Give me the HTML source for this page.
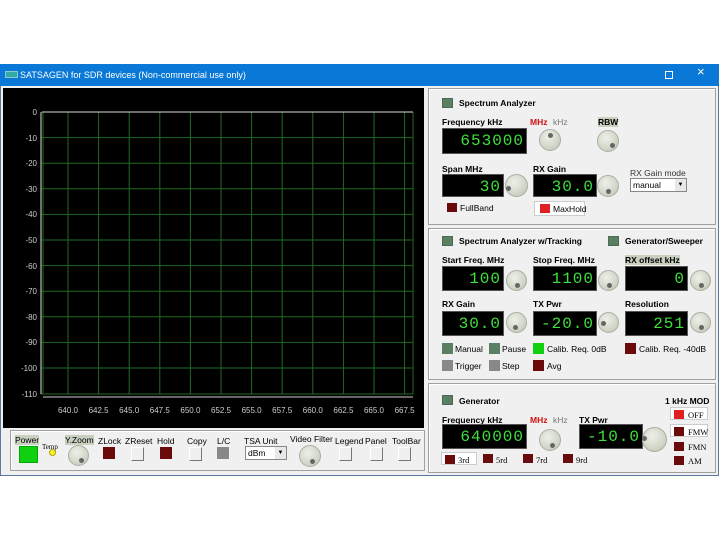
<!DOCTYPE html>
<html><head><meta charset="utf-8"><style>
*{margin:0;padding:0;box-sizing:border-box}
body{width:720px;height:540px;background:#fff;position:relative;overflow:hidden;font-family:"Liberation Sans",sans-serif;font-size:8px;color:#000}
.a{position:absolute}
.t{position:absolute;white-space:nowrap;font-size:8.5px;line-height:10px}
.b{font-weight:bold}
.sq{position:absolute;width:11px;height:10px;background:#5a7f62;border:1px solid #4a6a52}
.disp{position:absolute;background:#000;border:1px solid #555;color:#3de03d;font-family:"Liberation Mono",monospace;font-size:16px;letter-spacing:1px;text-align:right;padding-right:2px;line-height:24px}
.knob{position:absolute;border-radius:50%;background:radial-gradient(circle at 40% 35%,#eef0e8,#d0d6c8 60%,#b8bfb0);border:1px solid #a9b0a2}
.knob i{position:absolute;width:5px;height:5px;border-radius:50%;background:#666}
.panel{position:absolute;background:#f0f0f0;border:1px solid #a0a0a0;box-shadow:inset 1px 1px 0 #fff}
.btn{position:absolute;background:#f0f0f0;border:1px solid;border-color:#fff #777 #777 #fff}
.cb{position:absolute;width:10px;height:9px}
</style></head><body>
<div class="a" style="left:0;top:64px;width:719px;height:22px;background:#0a78d7"></div>
<div class="a" style="left:5px;top:71px;width:13px;height:7px;background:#3aa;border:1px solid #8cc"></div>
<div class="t" style="left:20px;top:70px;color:#fff;font-size:9px">SATSAGEN for SDR devices (Non-commercial use only)</div>
<div class="a" style="left:665px;top:71px;width:8px;height:8px;border:1px solid #fff"></div>
<div class="t" style="left:697px;top:67px;color:#fff;font-size:13px">×</div>
<div class="a" style="left:0;top:86px;width:719px;height:390px;background:#f0f0f0;border:1px solid #5a7aa0;border-top:none"></div>
<div class="a" style="left:3px;top:88px;width:421px;height:340px;background:#000"></div>
<svg class="a" style="left:0;top:0" width="430" height="430">
<g stroke="#1f6a1f" stroke-width="1">
<line x1="43" y1="112" x2="43" y2="394"/>
<line x1="68" y1="112" x2="68" y2="394"/><line x1="98.6" y1="112" x2="98.6" y2="394"/><line x1="129.2" y1="112" x2="129.2" y2="394"/><line x1="159.8" y1="112" x2="159.8" y2="394"/><line x1="190.4" y1="112" x2="190.4" y2="394"/><line x1="221" y1="112" x2="221" y2="394"/><line x1="251.6" y1="112" x2="251.6" y2="394"/><line x1="282.2" y1="112" x2="282.2" y2="394"/><line x1="312.8" y1="112" x2="312.8" y2="394"/><line x1="343.4" y1="112" x2="343.4" y2="394"/><line x1="374" y1="112" x2="374" y2="394"/><line x1="404.6" y1="112" x2="404.6" y2="394"/><line x1="413" y1="112" x2="413" y2="394"/>
<line x1="41" y1="137.6" x2="413" y2="137.6"/><line x1="41" y1="163.2" x2="413" y2="163.2"/><line x1="41" y1="188.8" x2="413" y2="188.8"/><line x1="41" y1="214.4" x2="413" y2="214.4"/><line x1="41" y1="240" x2="413" y2="240"/><line x1="41" y1="265.6" x2="413" y2="265.6"/><line x1="41" y1="291.2" x2="413" y2="291.2"/><line x1="41" y1="316.8" x2="413" y2="316.8"/><line x1="41" y1="342.4" x2="413" y2="342.4"/><line x1="41" y1="368" x2="413" y2="368"/><line x1="41" y1="394" x2="413" y2="394"/>
</g>
<line x1="42" y1="112" x2="413" y2="112" stroke="#ddd"/>
<line x1="41" y1="112" x2="41" y2="394" stroke="#ddd"/>
<line x1="43" y1="397" x2="413" y2="397" stroke="#ccc"/>
<g fill="#ccc" font-family="Liberation Sans" font-size="8" text-anchor="end">
<text x="37" y="115">0</text><text x="37" y="141">-10</text><text x="37" y="166">-20</text><text x="37" y="192">-30</text><text x="37" y="217">-40</text><text x="37" y="243">-50</text><text x="37" y="269">-60</text><text x="37" y="294">-70</text><text x="37" y="320">-80</text><text x="37" y="345">-90</text><text x="37" y="371">-100</text><text x="37" y="397">-110</text>
</g>
<g fill="#ccc" font-family="Liberation Sans" font-size="8" text-anchor="middle">
<text x="68" y="413">640.0</text><text x="98.6" y="413">642.5</text><text x="129.2" y="413">645.0</text><text x="159.8" y="413">647.5</text><text x="190.4" y="413">650.0</text><text x="221" y="413">652.5</text><text x="251.6" y="413">655.0</text><text x="282.2" y="413">657.5</text><text x="312.8" y="413">660.0</text><text x="343.4" y="413">662.5</text><text x="374" y="413">665.0</text><text x="404.6" y="413">667.5</text>
</g>
</svg>
<div class="panel" style="left:10px;top:430px;width:415px;height:41px"></div>
<div class="t" style="left:15px;top:435px;background:#c8d0c0;font-size:8.5px">Power</div>
<div class="a" style="left:19px;top:446px;width:19px;height:17px;background:#10d010;border:1px solid #0a0"></div>
<div class="t" style="left:42px;top:442px;font-size:7px;font-family:'Liberation Serif',serif">Temp</div>
<div class="a" style="left:49px;top:449px;width:7px;height:7px;border-radius:50%;background:#ffef30;border:1px solid #aa0"></div>
<div class="t" style="left:65px;top:435px;background:#c8d0c0">Y.Zoom</div>
<div class="knob" style="left:68px;top:445px;width:21px;height:21px"><i style="left:10px;top:12px"></i></div>
<div class="t" style="left:98px;top:436px">ZLock</div>
<div class="a" style="left:103px;top:447px;width:12px;height:12px;background:#6a0a0a"></div>
<div class="t" style="left:125px;top:436px">ZReset</div>
<div class="btn" style="left:131px;top:447px;width:13px;height:14px"></div>
<div class="t" style="left:157px;top:436px">Hold</div>
<div class="a" style="left:160px;top:447px;width:12px;height:12px;background:#6a0a0a"></div>
<div class="t" style="left:187px;top:436px">Copy</div>
<div class="btn" style="left:189px;top:447px;width:13px;height:14px"></div>
<div class="t" style="left:217px;top:436px">L/C</div>
<div class="a" style="left:217px;top:447px;width:12px;height:12px;background:#888"></div>
<div class="t" style="left:244px;top:436px">TSA Unit</div>
<div class="a" style="left:245px;top:446px;width:42px;height:14px;background:#fff;border:1px solid #888"><span class="t" style="left:2px;top:1px">dBm</span><span class="a" style="right:0;top:0;width:11px;height:12px;background:#e8e8e8;font-size:6px;text-align:center;line-height:12px">▼</span></div>
<div class="t" style="left:290px;top:434px">Video Filter</div>
<div class="knob" style="left:299px;top:445px;width:22px;height:22px"><i style="left:10px;top:13px"></i></div>
<div class="t" style="left:335px;top:436px">Legend</div>
<div class="btn" style="left:339px;top:447px;width:13px;height:14px"></div>
<div class="t" style="left:365px;top:436px">Panel</div>
<div class="btn" style="left:370px;top:447px;width:13px;height:14px"></div>
<div class="t" style="left:392px;top:436px">ToolBar</div>
<div class="btn" style="left:398px;top:447px;width:13px;height:14px"></div>

<div class="panel" style="left:428px;top:88px;width:288px;height:137px"></div>
<div class="sq" style="left:442px;top:98px"></div>
<div class="t b" style="left:459px;top:98px">Spectrum Analyzer</div>
<div class="t b" style="left:442px;top:117px">Frequency kHz</div>
<div class="disp" style="left:442px;top:128px;width:85px;height:26px">653000</div>
<div class="t b" style="left:530px;top:117px;color:#d01010">MHz</div>
<div class="t" style="left:553px;top:117px;color:#777">kHz</div>
<div class="knob" style="left:539px;top:129px;width:22px;height:22px"><i style="left:8px;top:3px"></i></div>
<div class="t b" style="left:598px;top:117px;background:#c8d0c0">RBW</div>
<div class="knob" style="left:597px;top:130px;width:22px;height:22px"><i style="left:12px;top:12px"></i></div>
<div class="t b" style="left:442px;top:164px">Span MHz</div>
<div class="disp" style="left:442px;top:174px;width:62px;height:23px">30</div>
<div class="knob" style="left:505px;top:174px;width:23px;height:23px"><i style="left:0px;top:11px"></i></div>
<div class="t b" style="left:533px;top:164px">RX Gain</div>
<div class="disp" style="left:533px;top:174px;width:64px;height:23px">30.0</div>
<div class="knob" style="left:597px;top:175px;width:22px;height:22px"><i style="left:8px;top:13px"></i></div>
<div class="t" style="left:630px;top:168px;color:#333">RX Gain mode</div>
<div class="a" style="left:630px;top:178px;width:57px;height:14px;background:#fff;border:1px solid #888"><span class="t" style="left:2px;top:1px">manual</span><span class="a" style="right:0;top:0;width:11px;height:12px;background:#e8e8e8;font-size:6px;text-align:center;line-height:12px">▼</span></div>
<div class="cb" style="left:447px;top:203px;background:#6a0a0a"></div>
<div class="t" style="left:460px;top:203px">FullBand</div>
<div class="a" style="left:534px;top:201px;width:51px;height:15px;background:#fff;border:1px solid #ccc"></div>
<div class="cb" style="left:540px;top:204px;background:#e02020"></div>
<div class="t" style="left:553px;top:204px">MaxHold</div>

<div class="panel" style="left:428px;top:228px;width:288px;height:152px"></div>
<div class="sq" style="left:442px;top:236px"></div>
<div class="t b" style="left:459px;top:236px">Spectrum Analyzer w/Tracking</div>
<div class="sq" style="left:608px;top:236px"></div>
<div class="t b" style="left:625px;top:236px">Generator/Sweeper</div>
<div class="t b" style="left:442px;top:255px">Start Freq. MHz</div>
<div class="t b" style="left:533px;top:255px">Stop Freq. MHz</div>
<div class="t b" style="left:625px;top:255px;background:#c8d0c0">RX offset kHz</div>
<div class="disp" style="left:442px;top:266px;width:62px;height:25px">100</div>
<div class="disp" style="left:533px;top:266px;width:64px;height:25px">1100</div>
<div class="disp" style="left:625px;top:266px;width:63px;height:25px">0</div>
<div class="knob" style="left:506px;top:270px;width:21px;height:21px"><i style="left:8px;top:12px"></i></div>
<div class="knob" style="left:598px;top:270px;width:21px;height:21px"><i style="left:8px;top:12px"></i></div>
<div class="knob" style="left:690px;top:270px;width:21px;height:21px"><i style="left:8px;top:12px"></i></div>
<div class="t b" style="left:442px;top:299px">RX Gain</div>
<div class="t b" style="left:533px;top:299px">TX Pwr</div>
<div class="t b" style="left:625px;top:299px">Resolution</div>
<div class="disp" style="left:442px;top:311px;width:62px;height:25px">30.0</div>
<div class="disp" style="left:533px;top:311px;width:64px;height:25px">-20.0</div>
<div class="disp" style="left:625px;top:311px;width:63px;height:25px">251</div>
<div class="knob" style="left:506px;top:312px;width:21px;height:21px"><i style="left:6px;top:12px"></i></div>
<div class="knob" style="left:598px;top:312px;width:21px;height:21px"><i style="left:2px;top:8px"></i></div>
<div class="knob" style="left:690px;top:312px;width:21px;height:21px"><i style="left:8px;top:12px"></i></div>
<div class="cb" style="left:442px;top:343px;width:11px;height:11px;background:#5a7f62"></div><div class="t" style="left:455px;top:344px">Manual</div>
<div class="cb" style="left:489px;top:343px;width:11px;height:11px;background:#5a7f62"></div><div class="t" style="left:502px;top:344px">Pause</div>
<div class="cb" style="left:533px;top:343px;width:11px;height:11px;background:#10d010"></div><div class="t" style="left:547px;top:344px">Calib. Req. 0dB</div>
<div class="cb" style="left:625px;top:343px;width:11px;height:11px;background:#6a0a0a"></div><div class="t" style="left:639px;top:344px">Calib. Req. -40dB</div>
<div class="cb" style="left:442px;top:360px;width:11px;height:11px;background:#888"></div><div class="t" style="left:455px;top:361px">Trigger</div>
<div class="cb" style="left:489px;top:360px;width:11px;height:11px;background:#888"></div><div class="t" style="left:502px;top:361px">Step</div>
<div class="cb" style="left:533px;top:360px;width:11px;height:11px;background:#6a0a0a"></div><div class="t" style="left:547px;top:361px">Avg</div>

<div class="panel" style="left:428px;top:383px;width:288px;height:90px"></div>
<div class="sq" style="left:442px;top:395px"></div>
<div class="t b" style="left:459px;top:396px">Generator</div>
<div class="t b" style="left:665px;top:396px">1 kHz MOD</div>
<div class="t b" style="left:442px;top:415px">Frequency kHz</div>
<div class="t b" style="left:530px;top:415px;color:#d01010">MHz</div>
<div class="t" style="left:553px;top:415px;color:#777">kHz</div>
<div class="t b" style="left:579px;top:415px">TX Pwr</div>
<div class="disp" style="left:442px;top:424px;width:85px;height:25px">640000</div>
<div class="knob" style="left:539px;top:429px;width:22px;height:22px"><i style="left:10px;top:13px"></i></div>
<div class="disp" style="left:579px;top:424px;width:64px;height:25px">-10.0</div>
<div class="knob" style="left:642px;top:427px;width:25px;height:25px"><i style="left:-1px;top:8px"></i></div>
<div class="a" style="left:441px;top:452px;width:36px;height:13px;background:#fff;border:1px solid #ccc"></div>
<div class="cb" style="left:445px;top:455px;background:#6a0a0a"></div><div class="t" style="left:458px;top:455px;font-family:'Liberation Serif',serif">3rd</div>
<div class="cb" style="left:483px;top:454px;background:#6a0a0a"></div><div class="t" style="left:496px;top:455px;font-family:'Liberation Serif',serif">5rd</div>
<div class="cb" style="left:523px;top:454px;background:#6a0a0a"></div><div class="t" style="left:536px;top:455px;font-family:'Liberation Serif',serif">7rd</div>
<div class="cb" style="left:563px;top:454px;background:#6a0a0a"></div><div class="t" style="left:576px;top:455px;font-family:'Liberation Serif',serif">9rd</div>
<div class="a" style="left:670px;top:407px;width:38px;height:13px;background:#fff;border:1px solid #ccc"></div>
<div class="cb" style="left:674px;top:410px;background:#e02020"></div><div class="t" style="left:688px;top:410px;font-family:'Liberation Serif',serif">OFF</div>
<div class="a" style="left:670px;top:424px;width:38px;height:13px;background:#fff;border:1px solid #ccc"></div>
<div class="cb" style="left:674px;top:427px;background:#6a0a0a"></div><div class="t" style="left:688px;top:427px;font-family:'Liberation Serif',serif">FMW</div>
<div class="cb" style="left:674px;top:442px;background:#6a0a0a"></div><div class="t" style="left:688px;top:442px;font-family:'Liberation Serif',serif">FMN</div>
<div class="cb" style="left:674px;top:456px;background:#6a0a0a"></div><div class="t" style="left:688px;top:456px;font-family:'Liberation Serif',serif">AM</div>
</body></html>
